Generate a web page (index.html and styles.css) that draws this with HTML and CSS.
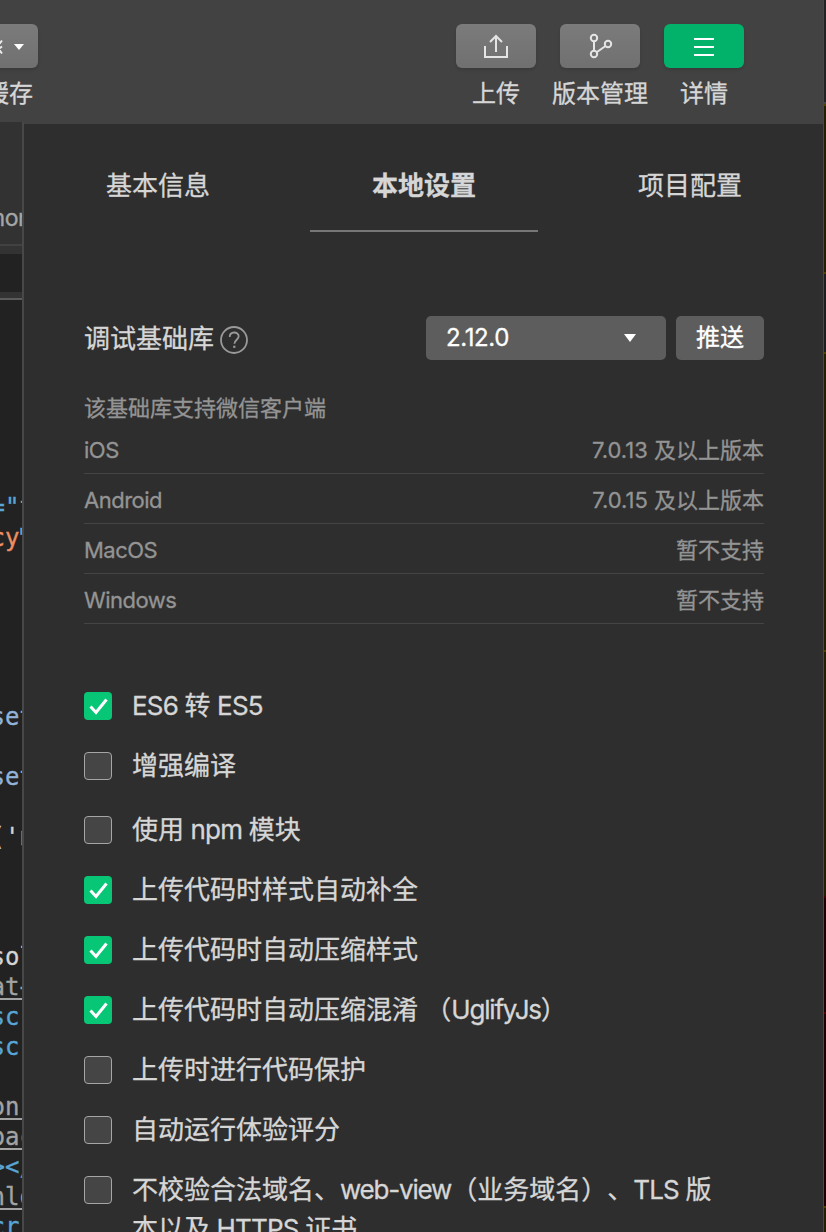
FILE: index.html
```html
<!DOCTYPE html>
<html lang="zh-CN">
<head>
<meta charset="utf-8">
<title>本地设置</title>
<link rel="stylesheet" href="styles.css">
</head>
<body>
<div class="window">
  <header class="toolbar">
    <div class="tool tool-cache">
      <div class="tool-button"><svg width="80" height="44" viewBox="0 0 80 44"><path d="M34 16l8 3 2-2.500M34 21.500l8 2.500 2-1.500M34 29l8-2 2 2.500" fill="none" stroke="#ededed" stroke-width="2"/><path d="M56 20h10l-5 6z" fill="#fff"/></svg></div>
      <div class="tool-label">清缓存</div>
    </div>
    <div class="tool-group">
      <div class="tool">
        <div class="tool-button"><svg width="80" height="44" viewBox="0 0 80 44" fill="none" stroke="#e5e5e5" stroke-width="2"><path d="M29 22v11h22V22M40 28V12M34 18l6-6 6 6"/></svg></div>
        <div class="tool-label">上传</div>
      </div>
      <div class="tool">
        <div class="tool-button"><svg width="80" height="44" viewBox="0 0 80 44" fill="none" stroke="#e5e5e5" stroke-width="2"><circle cx="34" cy="14" r="3.2"/><circle cx="34" cy="30" r="3.2"/><circle cx="48" cy="20" r="3.2"/><path d="M34 17v10M37 28l8.500-6"/></svg></div>
        <div class="tool-label">版本管理</div>
      </div>
      <div class="tool">
        <div class="tool-button active"><svg width="80" height="44" viewBox="0 0 80 44" stroke="#fff" stroke-width="2"><path d="M30 15h20M30 23h20M30 31h20"/></svg></div>
        <div class="tool-label">详情</div>
      </div>
    </div>
  </header>
  <main class="workspace">
    <aside class="editor">
      <div class="editor-tab">mon</div>
      <div class="editor-bar"></div>
      <pre class="code"><span class="l blue">="<i class="orange">t</i></span><span class="l orange low">cy<i class="blue near">"</i></span><span class="l"></span><span class="l"></span><span class="l"></span><span class="l"></span><span class="l"></span><span class="l pale">set</span><span class="l"></span><span class="l pale">set</span><span class="l"></span><span class="l">('n</span><span class="l"></span><span class="l"></span><span class="l"></span><span class="l">sol</span><span class="l link">at<i class="near">-</i></span><span class="l blue">sc</span><span class="l blue">sc</span><span class="l"></span><span class="l link">on </span><span class="l link">pac</span><span class="l blue">&gt;&lt;/</span><span class="l link">nlo</span><span class="l blue">cr</span></pre>
    </aside>
    <section class="panel">
      <nav class="tabs">
        <div class="tab">基本信息</div>
        <div class="tab selected">本地设置</div>
        <div class="tab">项目配置</div>
      </nav>
      <div class="library">
        <span class="library-label">调试基础库</span>
        <svg class="help" width="28" height="28" viewBox="0 0 28 28" fill="none" stroke="#999" stroke-width="1.800"><circle cx="14" cy="14" r="13"/><path d="M9.700 11c0-6 9-5.800 9-.7 0 3.200-4.300 3.800-4.300 7.500"/><path d="M13.200 20.800h2.200" stroke-width="2.200"/></svg>
        <div class="select"><span>2.12.0</span><svg width="12" height="8" viewBox="0 0 12 8"><path d="M0 0h12L6 8z" fill="#fff"/></svg></div>
        <div class="push">推送</div>
      </div>
      <div class="support">
        <div class="support-title">该基础库支持微信客户端</div>
        <div class="support-row"><span class="platform">iOS</span><span>7.0.13 及以上版本</span></div>
        <div class="support-row"><span class="platform">Android</span><span>7.0.15 及以上版本</span></div>
        <div class="support-row"><span class="platform">MacOS</span><span>暂不支持</span></div>
        <div class="support-row"><span class="platform">Windows</span><span>暂不支持</span></div>
      </div>
      <div class="options">
        <div class="option"><span class="check on"><svg width="28" height="28" viewBox="0 0 28 28"><path d="M6.500 14.500l5.500 6L22.500 7.500"/></svg></span><span class="text"><span class="latin">ES6 </span>转<span class="latin"> ES5</span></span></div>
        <div class="option wide"><span class="check"></span><span class="text">增强编译</span></div>
        <div class="option"><span class="check"></span><span class="text">使用<span class="latin"> npm </span>模块</span></div>
        <div class="option"><span class="check on"><svg width="28" height="28" viewBox="0 0 28 28"><path d="M6.500 14.500l5.500 6L22.500 7.500"/></svg></span><span class="text">上传代码时样式自动补全</span></div>
        <div class="option"><span class="check on"><svg width="28" height="28" viewBox="0 0 28 28"><path d="M6.500 14.500l5.500 6L22.500 7.500"/></svg></span><span class="text">上传代码时自动压缩样式</span></div>
        <div class="option"><span class="check on"><svg width="28" height="28" viewBox="0 0 28 28"><path d="M6.500 14.500l5.500 6L22.500 7.500"/></svg></span><span class="text">上传代码时自动压缩混淆 （<span class="latin tight">UglifyJs</span>）</span></div>
        <div class="option"><span class="check"></span><span class="text">上传时进行代码保护</span></div>
        <div class="option"><span class="check"></span><span class="text">自动运行体验评分</span></div>
        <div class="option"><span class="check"></span><span class="text">不校验合法域名、<span class="latin tight">web-view</span>（业务域名）、<span class="latin">TLS </span>版<br>本以及<span class="latin"> HTTPS </span>证书</span></div>
      </div>
    </section>
  </main>
</div>
<div class="backdrop"></div>
</body>
</html>
```

FILE: styles.css
```css
* { box-sizing: border-box; }
body {
  margin: 0;
  width: 826px;
  height: 1232px;
  overflow: hidden;
  display: flex;
  background: #222;
  color: #d6d6d6;
  font-family: Inter, "Noto Sans CJK SC", sans-serif;
  font-size: 26px;
  text-spacing-trim: space-all;
  -webkit-text-stroke: .3px currentColor;
}
svg { display: block; flex: none; }
.window { width: 824px; height: 1232px; display: flex; flex-direction: column; border-right: 1px solid #484848; }
.backdrop {
  width: 2px;
  background: linear-gradient(#222 0 102px, #444 102px 104px, #504000 104px 106px, #251d03 106px 272px, #504000 272px 274px, #1d1d1d 274px 352px, #504000 352px 354px, #251d03 354px 650px, #504000 650px 652px, #251d03 652px 896px, #400000 896px 898px, #1d0000 898px 1012px, #500000 1012px 1014px, #1d0000 1014px 1206px, #504000 1206px 1208px, #251d03 1208px);
}

.toolbar {
  height: 124px;
  flex: none;
  padding-top: 24px;
  display: flex;
  justify-content: space-between;
  background: #424242;
  padding-right: 79px;
}
.tool { width: 80px; display: flex; flex-direction: column; align-items: center; }
.tool-cache { margin-left: -42px; }
.tool-cache .tool-label { margin-left: -2px; }
.tool-group { display: flex; gap: 24px; }
.tool-button {
  width: 80px;
  height: 44px;
  border-radius: 6px;
  background: linear-gradient(#7b7b7b, #707070);
  box-shadow: 0 2px 3px rgba(0, 0, 0, .12);
}
.tool-button.active { background: #02b26a; }
.tool-label { margin-top: 8px; font-size: 24px; line-height: 36px; white-space: nowrap; }

.workspace { flex: 1; min-height: 0; display: flex; }
.editor {
  width: 24px;
  flex: none;
  margin-top: -2px;
  overflow: hidden;
  border-right: 2px solid #484848;
  background: #222;
}
.editor-tab {
  height: 124px;
  padding-top: 80px;
  background: #323232;
  border-bottom: 2px solid #424242;
  color: #a6a6a6;
  font: 23px/32px Inter, sans-serif;
  text-indent: -15px;
  letter-spacing: -.5px;
}
.editor-bar { height: 54px; background: #222; border-top: 8px solid #333; border-bottom: 2px solid #5b5b5b; box-shadow: inset 0 -6px #333; }
.code {
  margin: 192px 0 0 -9.400px;
  color: #d4d4d4;
  font: 24px/30px "DejaVu Sans Mono", monospace;
}
.l { display: block; height: 30px; white-space: pre; }
.l.low { line-height: 33px; }
.code i { font-style: normal; }
.code .near { margin-left: -3px; }
.blue { color: #58a6d6; }
.orange { color: #ed8f63; }
.pale { color: #92b3d8; }
.link { color: #a3a3a3; text-decoration: underline; text-decoration-thickness: 2px; text-underline-offset: 3px; }

.panel { width: 799px; flex: none; overflow: hidden; background: #2e2e2e; }
.tabs { height: 108px; padding-left: 20px; display: flex; gap: 38px; }
.tab { width: 228px; height: 108px; line-height: 124px; text-align: center; }
.tab.selected { font-weight: 700; border-bottom: 2px solid #777; }

.library { margin: 84px 59px 0 60px; height: 44px; display: flex; align-items: center; }
.library-label { line-height: 44px; margin-top: 2px; }
.help { margin: 4px 0 0 6px; }
.select {
  width: 240px;
  height: 44px;
  margin-left: auto;
  padding: 0 30px 0 20px;
  display: flex;
  justify-content: space-between;
  align-items: center;
  border-radius: 5px;
  background: #5d5d5d;
  color: #fff;
  font-size: 24px;
  letter-spacing: -.4px;
}
.select span { margin-top: -2px; }
.push {
  width: 88px;
  height: 44px;
  margin-left: 10px;
  border-radius: 5px;
  background: #5d5d5d;
  color: #fff;
  font-size: 24px;
  line-height: 44px;
  text-align: center;
}

.support { margin: 32px 59px 0 60px; color: #949494; font-size: 22px; }
.support-title { height: 32px; line-height: 32px; }
.support-row { height: 50px; line-height: 52px; display: flex; justify-content: space-between; border-bottom: 1px solid #444; }
.platform { letter-spacing: -.5px; }

.options { margin: 64px 59px 0 60px; }
.option { height: 60px; display: flex; gap: 20px; white-space: nowrap; }
.option.wide { height: 64px; }
.text { margin-top: -2.500px; line-height: 39px; }
.latin { letter-spacing: -.8px; }
.latin.tight { letter-spacing: -1.200px; }
.check {
  width: 28px;
  height: 28px;
  margin-top: 4px;
  flex: none;
  border: 1px solid #a5a5a5;
  border-radius: 4px;
  background: #454545;
}
.check.on { border: 0; background: #07c776; }
.check path { fill: none; stroke: #fff; stroke-width: 3; }
```
